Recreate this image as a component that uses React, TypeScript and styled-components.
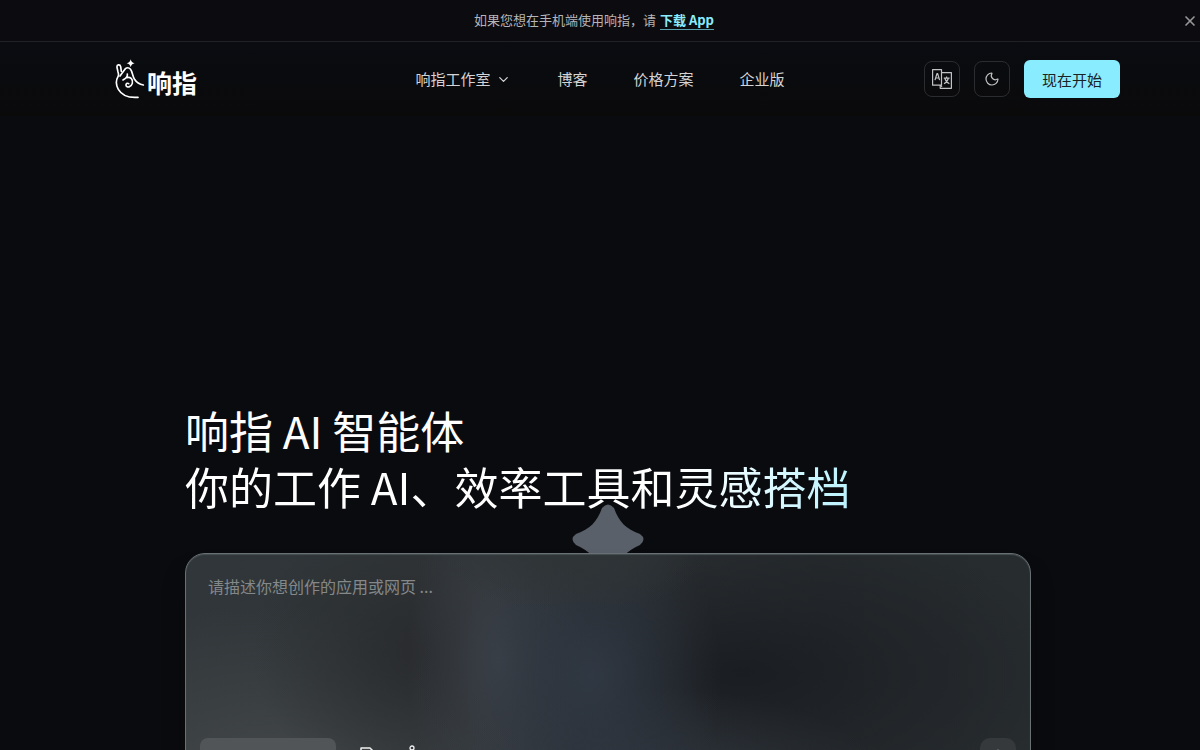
import React, { useState } from 'react';
import styled, { createGlobalStyle } from 'styled-components';
import { ChevronDown, Moon, X } from 'lucide-react';

const GlobalStyle = createGlobalStyle`
  * { box-sizing: border-box; }
  body {
    margin: 0;
    background: #0a0b0f;
    color: #fff;
    font-family: "Noto Sans CJK SC", sans-serif;
  }
  button, textarea { font-family: inherit; }
`;

const Page = styled.div`
  min-height: 100vh;
  overflow: hidden;
`;

const Banner = styled.aside`
  display: flex;
  align-items: center;
  height: 42px;
  background: #0c0b10;
  border-bottom: 1px solid #202126;
`;

const BannerText = styled.p`
  flex: 1;
  margin: 0;
  padding: 0 0 2px 8px;
  font-size: 13px;
  line-height: 20px;
  text-align: center;
  color: #b5b5b7;
`;

const BannerLink = styled.a`
  display: inline-block;
  margin-left: 1px;
  line-height: 18px;
  color: #8aecff;
  font-weight: 700;
  text-decoration: none;
  border-bottom: 1px solid #5ba2b0;
`;

const CloseButton = styled.button`
  display: flex;
  width: 20px;
  padding: 0 2px;
  border: 0;
  background: none;
  color: #97979a;
`;

const Header = styled.header`
  display: grid;
  grid-template-columns: 1fr auto 1fr;
  align-items: center;
  padding: 18px 80px;
  background: linear-gradient(#0a0c11, #0a0a0b);
`;

const Logo = styled.a`
  display: flex;
  align-items: center;
  gap: 1px;
  padding-left: 34px;
  height: 38px;
  color: #fff;
  text-decoration: none;
`;

const LogoName = styled.span`
  font-size: 25px;
  line-height: 30px;
  font-weight: 700;
  padding-top: 6px;
`;

const Nav = styled.nav`
  display: flex;
  align-items: center;
  gap: 46px;
`;

const NavLink = styled.a`
  display: flex;
  align-items: center;
  gap: 6px;
  font-size: 15px;
  line-height: 24px;
  color: #d4d4d5;
  text-decoration: none;
`;

const Actions = styled.div`
  display: flex;
  align-items: center;
  justify-content: flex-end;
  gap: 14px;
`;

const IconButton = styled.button`
  display: grid;
  place-items: center;
  width: 36px;
  height: 36px;
  padding: 0;
  border: 1px solid #2b2c30;
  border-radius: 8px;
  background: transparent;
  color: #c2c2c4;
`;

const StartButton = styled.button`
  height: 38px;
  padding: 2px 18px 0;
  border: 0;
  border-radius: 6px;
  background: #8aecff;
  color: #1b2224;
  font-size: 15px;
  line-height: 24px;
`;

const Hero = styled.main`
  position: relative;
  max-width: 862px;
  margin: 0 auto;
  padding: 286px 0 48px 16px;
`;

const Title = styled.h1`
  position: relative;
  z-index: 1;
  margin: 0 0 39px;
  font-size: 44px;
  line-height: 56px;
  font-weight: 400;
`;

const TitleLine = styled.span`
  display: block;
  width: fit-content;
`;

const GradientLine = styled(TitleLine)`
  background: linear-gradient(90deg, #fff 75%, #baf3ff 100%);
  background-clip: text;
  color: transparent;
`;

const Composer = styled.form`
  position: relative;
  border: 1px solid #687074;
  border-radius: 20px;
  padding: 16px 14px 14px;
  background:
    radial-gradient(ellipse 130px 60px at 46% 0, #2f3436 0%, #2f343699 50%, transparent 100%),
    radial-gradient(ellipse 130px 170px at 48% 52%, #303843 0%, #30384380 50%, transparent 100%),
    radial-gradient(ellipse 90px 190px at 37% 45%, #3c4148 0%, #3b404790 45%, transparent 100%),
    radial-gradient(ellipse 240px 100px at 55% 100%, #2e343e 0%, #2d333b88 50%, transparent 100%),
    radial-gradient(ellipse 330px 150px at 66% 51%, #1a1d21 0%, #1f2226aa 50%, transparent 100%),
    radial-gradient(ellipse 170px 140px at 28% 42%, #292b2e 0%, #2b2e3190 50%, transparent 100%),
    radial-gradient(ellipse 300px 170px at 10% 95%, #43474a 0%, transparent 100%),
    linear-gradient(90deg, #303639 0%, #2f3437 45%, #252a2d 75%, #272c2f 100%);
  box-shadow: 0 20px 20px #0a0a0b, inset 0 1px 1px #485054;
`;

const Prompt = styled.textarea`
  display: block;
  width: 100%;
  height: 168px;
  padding: 4px 8px;
  border: 0;
  outline: 0;
  resize: none;
  background: transparent;
  color: #fff;
  font-size: 16px;
  line-height: 24px;
  &::placeholder { color: #858889; opacity: 1; }
`;

const Toolbar = styled.div`
  display: flex;
  align-items: center;
  gap: 16px;
`;

const ModeButton = styled.button`
  width: 136px;
  height: 36px;
  border: 0;
  border-radius: 8px;
  background: #515557;
`;

const ToolButton = styled.button`
  display: grid;
  place-items: center;
  width: 30px;
  height: 36px;
  padding: 0;
  border: 0;
  background: none;
  color: #f0f0f0;
`;

const SendButton = styled.button`
  display: grid;
  justify-items: center;
  width: 36px;
  height: 36px;
  margin-left: auto;
  padding: 11px 0 0;
  border: 0;
  border-radius: 10px;
  background: #35393c;
  color: #6d7173;
`;

const StarShape = styled.svg`
  position: absolute;
  top: 388px;
  left: calc(50% + 8px);
  margin-left: -36px;
`;

const HandMark = () => (
  <svg width="32" height="42" viewBox="42 24 96 126" fill="none" stroke="currentColor" strokeWidth="5" strokeLinecap="round" strokeLinejoin="round" aria-hidden="true">
    <path d="M114 142C88 144 66 137 55 118C47 104 47 92 54 80Q57 75 54 66L51 52C50 43 60 42 62 50L64 64" />
    <path d="M60 78L66 70L76 56Q84 50 91 57C97 64 97 76 103 87C110 98 118 103 130 105" />
    <path d="M69 90C76 86 84 82 82 72M80 83C92 80 100 88 97 100C94 111 80 115 78 106C77 101 82 98 86 101" />
    <path d="M92 28Q94 38 104 40Q94 42 92 52Q90 42 80 40Q90 38 92 28Z" fill="currentColor" stroke="none" />
  </svg>
);

const TranslateIcon = () => (
  <svg width="20" height="20" viewBox="0 0 20 20" fill="none" stroke="currentColor" strokeWidth="1.2" strokeLinejoin="round" aria-hidden="true">
    <path d="M.6.6H9.5V16.2H.6ZM9.5 3.6H19.4V19.3H8.2V16.2" />
    <path d="M3 11.2 5 4.5h.6l2 6.7M3.7 9H7" />
    <path d="M11.8 9.2h5.8M14.6 7.4v1.8M16.4 9.2c-.7 2.7-2.1 4.5-4.4 5.5M12.8 9.2c.7 2.7 2.2 4.5 4.6 5.5M8.5 16.2l1.5 1.7" />
  </svg>
);

export default function App() {
  const [bannerOpen, setBannerOpen] = useState(true);
  const [prompt, setPrompt] = useState('');
  return (
    <Page>
      <GlobalStyle />
      {bannerOpen && (
        <Banner>
          <BannerText>
            如果您想在手机端使用响指，请 <BannerLink href="#app">下载 App</BannerLink>
          </BannerText>
          <CloseButton type="button" aria-label="关闭" onClick={() => setBannerOpen(false)}>
            <X size={16} strokeWidth={2.5} />
          </CloseButton>
        </Banner>
      )}
      <Header>
        <Logo href="#home">
          <HandMark />
          <LogoName>响指</LogoName>
        </Logo>
        <Nav>
          <NavLink href="#studio">
            响指工作室
            <ChevronDown size={15} />
          </NavLink>
          <NavLink href="#blog">博客</NavLink>
          <NavLink href="#pricing">价格方案</NavLink>
          <NavLink href="#business">企业版</NavLink>
        </Nav>
        <Actions>
          <IconButton type="button" aria-label="语言"><TranslateIcon /></IconButton>
          <IconButton type="button" aria-label="深色模式"><Moon size={16} strokeWidth={1.8} /></IconButton>
          <StartButton type="button">现在开始</StartButton>
        </Actions>
      </Header>
      <Hero>
        <StarShape width="72" height="72" viewBox="0 0 72 72" aria-hidden="true">
          <path d="M30 4Q36-3 42 4C47 18 54 25 68 30Q75 35 68 41C55 47 47 54 42 68Q36 75 30 68C25 54 17 47 4 41Q-3 35 4 30C18 25 25 18 30 4Z" fill="#596069" />
        </StarShape>
        <Title>
          <TitleLine>响指 AI 智能体</TitleLine>
          <GradientLine>你的工作 AI、效率工具和灵感搭档</GradientLine>
        </Title>
        <Composer onSubmit={(e) => e.preventDefault()}>
          <Prompt
            aria-label="描述"
            placeholder="请描述你想创作的应用或网页 ..."
            value={prompt}
            onChange={(e) => setPrompt(e.target.value)}
          />
          <Toolbar>
            <ModeButton type="button" aria-label="模式" />
            <ToolButton type="button" aria-label="添加文件">
              <svg width="18" height="18" viewBox="0 0 18 18" fill="none" stroke="currentColor" strokeWidth="1.5" strokeLinejoin="round">
                <path d="M3 17V1h9l3 3v13z" />
              </svg>
            </ToolButton>
            <ToolButton type="button" aria-label="智能体">
              <svg width="18" height="22" viewBox="0 0 18 22" fill="none" stroke="currentColor" strokeWidth="1.3">
                <circle cx="8" cy="3" r="2" />
                <path d="M8 5v3M3 8h12v11H3z" />
              </svg>
            </ToolButton>
            <SendButton type="submit" aria-label="发送">
              <svg width="16" height="16" viewBox="0 0 16 16" fill="none" stroke="currentColor" strokeWidth="1.5">
                <path d="M8 15V1M2 7l6-6 6 6" />
              </svg>
            </SendButton>
          </Toolbar>
        </Composer>
      </Hero>
    </Page>
  );
}
